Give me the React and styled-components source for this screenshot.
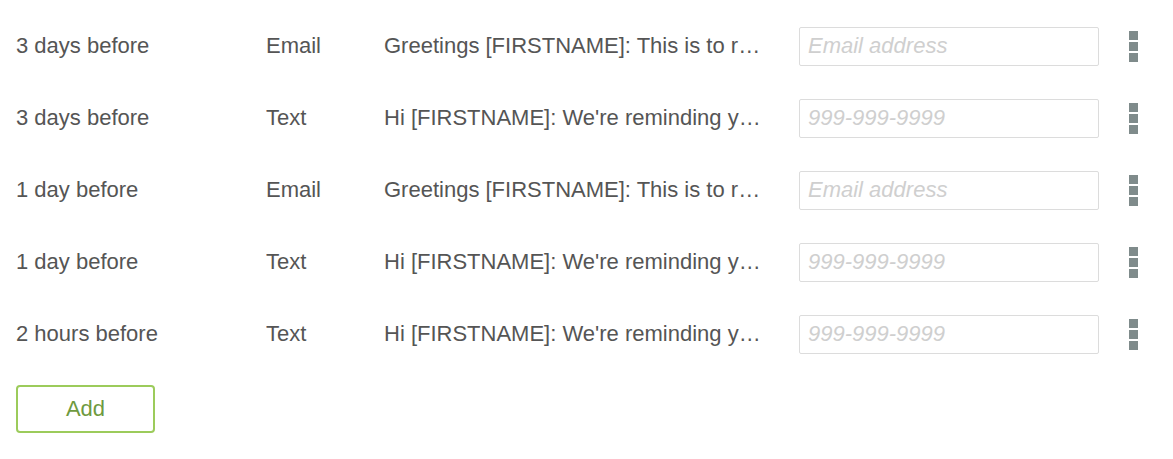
import React from 'react';
import styled, { createGlobalStyle } from 'styled-components';

const GlobalStyle = createGlobalStyle`
body {
  margin: 0;
  background: #fff;
  font-family: "Liberation Sans", Arial, sans-serif;
}
`

const Page = styled.div`
padding: 10px 16px 0;
`

const ReminderRow = styled.div`
display: grid;
grid-template-columns: 250px 118px 385px 300px 30px;
column-gap: 0;
align-items: center;
height: 72px;
`

const Cell = styled.div`
color: #555;
font-size: 22px;
white-space: nowrap;
overflow: hidden;
text-overflow: ellipsis;
padding-right: ${({pad}) => pad || 0}px;
`

const ContactInput = styled.input`
box-sizing: border-box;
width: 300px;
height: 39px;
margin-left: 30px;
border: 1px solid #dcdcdc;
border-radius: 2px;
padding: 0 8px;
font-family: "Liberation Sans", Arial, sans-serif;
font-size: 22px;
color: #555;
outline: none;
&::placeholder {
  color: #cfcfcf;
  font-style: italic;
}
`

const MenuButton = styled.button`
display: flex;
flex-direction: column;
gap: 2px;
margin-left: 60px;
padding: 0;
border: none;
background: none;
cursor: pointer;
`

const Dot = styled.span`
width: 9px;
height: 9px;
background: #7f8b8b;
`

const AddButton = styled.button`
box-sizing: border-box;
margin-top: 15px;
width: 139px;
height: 48px;
border: 2px solid #9ccb5b;
border-radius: 4px;
background: #fff;
color: #6f9a3f;
font-family: "Liberation Sans", Arial, sans-serif;
font-size: 22px;
cursor: pointer;
`

const reminders = [
  {when: '3 days before', via: 'Email', msg: 'Greetings [FIRSTNAME]: This is to remind you of your upcoming appointment', ph: 'Email address'},
  {when: '3 days before', via: 'Text', msg: "Hi [FIRSTNAME]: We're reminding you of your appointment", ph: '999-999-9999'},
  {when: '1 day before', via: 'Email', msg: 'Greetings [FIRSTNAME]: This is to remind you of your upcoming appointment', ph: 'Email address'},
  {when: '1 day before', via: 'Text', msg: "Hi [FIRSTNAME]: We're reminding you of your appointment", ph: '999-999-9999'},
  {when: '2 hours before', via: 'Text', msg: "Hi [FIRSTNAME]: We're reminding you of your appointment", ph: '999-999-9999'},
];

function App() {
  return <Page>
    <GlobalStyle/>
    {reminders.map((r, i) => (
      <ReminderRow key={i}>
        <Cell>{r.when}</Cell>
        <Cell>{r.via}</Cell>
        <Cell>{r.msg}</Cell>
        <ContactInput placeholder={r.ph}/>
        <MenuButton aria-label="More">
          <Dot/><Dot/><Dot/>
        </MenuButton>
      </ReminderRow>
    ))}
    <AddButton>Add</AddButton>
  </Page>
}

export default App;
